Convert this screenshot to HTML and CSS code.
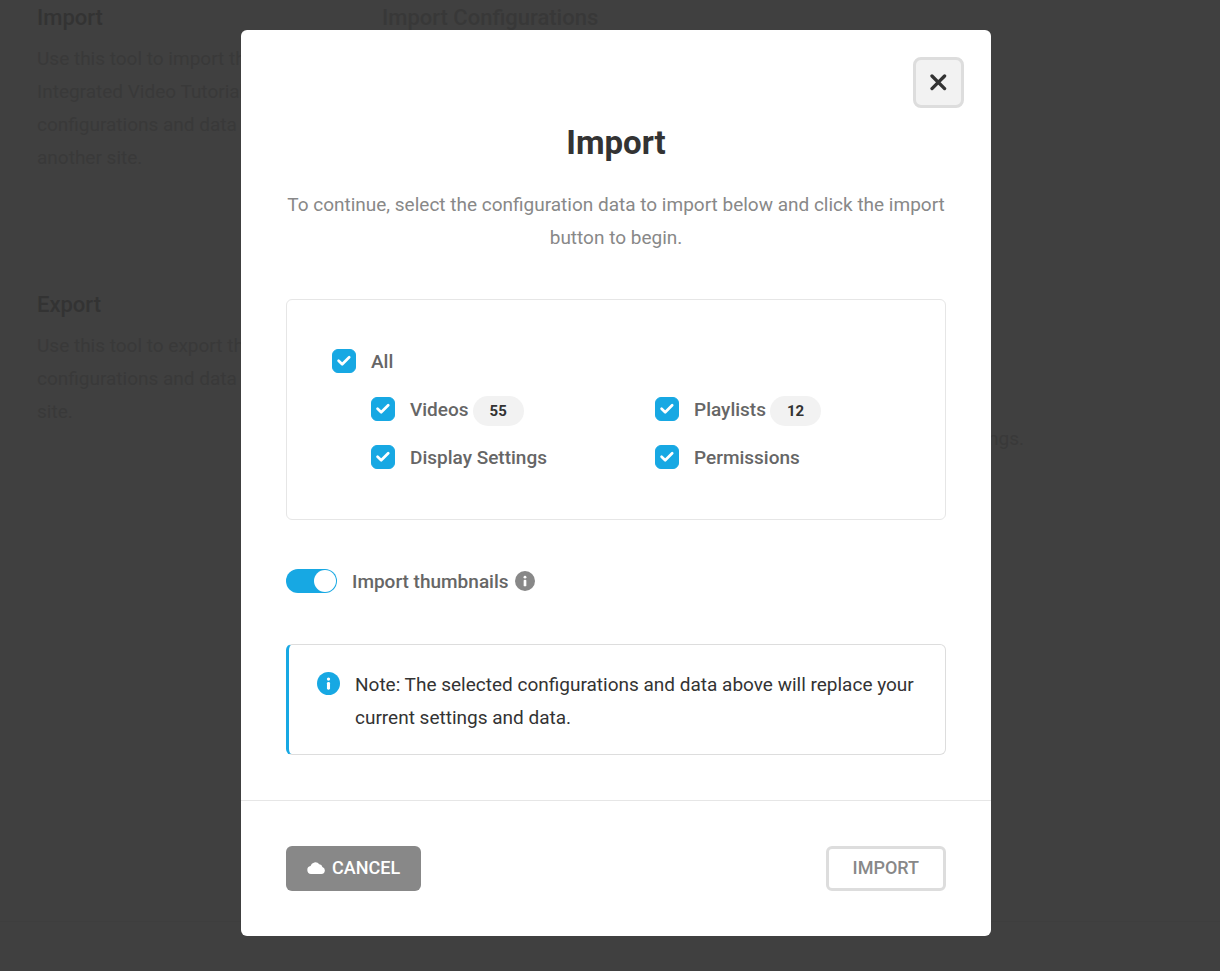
FILE: index.html
```html
<!DOCTYPE html>
<html lang="en">
<head>
<meta charset="utf-8">
<meta name="viewport" content="width=device-width, initial-scale=1">
<title>Import</title>
<link rel="stylesheet" href="styles.css">
</head>
<body>
<main class="page">
  <section class="setting setting-import">
    <div class="setting-label">
      <h2 class="setting-title">Import</h2>
      <p class="setting-text">Use this tool to import the Integrated Video Tutorials configurations and data from another site.</p>
    </div>
    <div class="setting-body">
      <h3 class="setting-subtitle">Import Configurations</h3>
    </div>
  </section>
  <section class="setting setting-export">
    <div class="setting-label">
      <h2 class="setting-title">Export</h2>
      <p class="setting-text">Use this tool to export the configurations and data to another site.</p>
    </div>
    <div class="setting-body">
      <p class="setting-hint">Settings.</p>
    </div>
  </section>
  <div class="page-end"></div>
</main>

<div class="overlay">
  <div class="modal" role="dialog" aria-modal="true" aria-labelledby="modal-title" aria-describedby="modal-text">
    <div class="modal-top">
      <button class="close" type="button" aria-label="Close">
        <svg class="close-icon" viewBox="0 0 17 17" aria-hidden="true"><path d="M2 2 14.6 14.6M14.6 2 2 14.6" fill="none" stroke="#333" stroke-width="3.3" stroke-linecap="round"/></svg>
      </button>
    </div>
    <div class="modal-content">
      <h1 class="modal-title" id="modal-title">Import</h1>
      <p class="modal-text" id="modal-text">To continue, select the configuration data to import below and click the import button to begin.</p>

      <div class="options">
        <label class="option"><span class="tick"><input class="tick-input" type="checkbox" checked><svg class="tick-icon" viewBox="0 0 24 24" aria-hidden="true"><path d="M6.6 11.8 10.2 15.2 17.2 8.2" /></svg></span><span class="option-name">All</span></label>
        <div class="option-grid">
          <label class="option"><span class="tick"><input class="tick-input" type="checkbox" checked><svg class="tick-icon" viewBox="0 0 24 24" aria-hidden="true"><path d="M6.6 11.8 10.2 15.2 17.2 8.2" /></svg></span><span class="option-name">Videos</span><span class="tag">55</span></label>
          <label class="option"><span class="tick"><input class="tick-input" type="checkbox" checked><svg class="tick-icon" viewBox="0 0 24 24" aria-hidden="true"><path d="M6.6 11.8 10.2 15.2 17.2 8.2" /></svg></span><span class="option-name">Playlists</span><span class="tag">12</span></label>
          <label class="option"><span class="tick"><input class="tick-input" type="checkbox" checked><svg class="tick-icon" viewBox="0 0 24 24" aria-hidden="true"><path d="M6.6 11.8 10.2 15.2 17.2 8.2" /></svg></span><span class="option-name">Display Settings</span></label>
          <label class="option"><span class="tick"><input class="tick-input" type="checkbox" checked><svg class="tick-icon" viewBox="0 0 24 24" aria-hidden="true"><path d="M6.6 11.8 10.2 15.2 17.2 8.2" /></svg></span><span class="option-name">Permissions</span></label>
        </div>
      </div>

      <div class="thumbs">
        <label class="option"><input class="switch" type="checkbox" role="switch" checked><span class="option-name">Import thumbnails</span></label>
        <svg class="info info-small" viewBox="0 0 24 24" aria-hidden="true"><circle cx="12" cy="12" r="12"/><circle class="info-mark" cx="12" cy="7.4" r="1.7"/><rect class="info-mark" x="10.4" y="10.4" width="3.2" height="8" rx="1.4"/></svg>
      </div>

      <div class="note">
        <svg class="info info-blue" viewBox="0 0 24 24" aria-hidden="true"><circle cx="12" cy="12" r="12"/><circle class="info-mark" cx="12" cy="7.4" r="1.7"/><rect class="info-mark" x="10.4" y="10.4" width="3.2" height="8" rx="1.4"/></svg>
        <p class="note-text">Note: The selected configurations and data above will replace your current settings and data.</p>
      </div>
    </div>
    <div class="modal-footer">
      <button class="button button-gray" type="button">
        <svg class="cloud" viewBox="0 0 18 12" aria-hidden="true"><path d="M4 12a4 4 0 0 1-.5-7.9A5 5 0 0 1 12.3 2.2 3.6 3.6 0 0 1 15.4 5 3.6 3.6 0 0 1 14.4 12Z" fill="#fff"/></svg>
        CANCEL
      </button>
      <button class="button button-ghost" type="button">IMPORT</button>
    </div>
  </div>
</div>
</body>
</html>
```
FILE: styles.css
```css
* {
  box-sizing: border-box;
}

body {
  margin: 0;
  background: #404040;
  color: #666;
  font-family: Roboto, "Liberation Sans", sans-serif;
  font-size: 19px;
  line-height: 33px;
}

h1, h2, h3, p {
  margin: 0;
}

.page {
  height: 100vh;
  overflow: hidden;
  padding: 1px 0 0 37px;
  color: #393939;
}

.setting {
  display: grid;
  grid-template-columns: 300px 1fr;
  gap: 45px;
}

.setting-export {
  margin-top: 114px;
}

.setting-title {
  margin-bottom: 8px;
  color: #333;
  font-size: 22px;
  font-weight: 500;
}

.setting-subtitle {
  color: #383838;
  font-size: 22px;
  font-weight: 500;
}

.setting-hint {
  width: 642px;
  padding-top: 134px;
  text-align: right;
}

.page-end {
  margin: 466px 0 0 -37px;
  border-top: 1px solid #3e3e3e;
}

.overlay {
  position: fixed;
  inset: 0;
  overflow: hidden;
  padding: 30px 0 30px 12px;
}

.modal {
  max-width: 750px;
  margin: 0 auto;
  border-radius: 6px;
  background: #fff;
}

.modal-top {
  display: flex;
  justify-content: flex-end;
  padding: 27px 27px 0;
}

.close {
  display: grid;
  place-items: center;
  width: 51px;
  height: 51px;
  padding: 0;
  border: 3px solid #ddd;
  border-radius: 8px;
  background: #f2f2f2;
}

.close-icon {
  width: 17px;
  height: 17px;
}

.modal-content {
  padding: 12px 45px 45px;
}

.modal-title {
  margin-bottom: 22px;
  color: #333;
  font-size: 33px;
  font-weight: 700;
  line-height: 46px;
  text-align: center;
}

.modal-text {
  color: #888;
  text-align: center;
}

.options {
  margin-top: 45px;
  padding: 45px;
  border: 1px solid #e6e6e6;
  border-radius: 6px;
}

.option {
  display: flex;
  align-items: center;
  height: 33px;
  font-weight: 500;
}

.option-name {
  margin-left: 15px;
}

.option-grid {
  display: grid;
  grid-template-columns: 1fr 1fr;
  gap: 15px 39px;
  padding: 15px 0 0 39px;
}

.tick {
  display: grid;
  padding-bottom: 1px;
}

.tick-input,
.tick-icon {
  grid-area: 1 / 1;
  width: 24px;
  height: 24px;
}

.tick-input {
  margin: 0;
  border: 1px solid #ddd;
  border-radius: 6px;
  appearance: none;
}

.tick-input:checked {
  border-color: #17a8e3;
  background: #17a8e3;
}

.tick-icon {
  fill: none;
  stroke: #fff;
  stroke-width: 2.7;
  stroke-linecap: round;
  stroke-linejoin: round;
  pointer-events: none;
}

.tag {
  align-self: flex-end;
  margin-left: 4px;
  padding: 0 17px;
  border-radius: 15px;
  background: #f2f2f2;
  color: #333;
  font-size: 15px;
  font-weight: 700;
  line-height: 30px;
}

.thumbs {
  display: flex;
  align-items: center;
  gap: 6px;
  margin-top: 45px;
}

.switch {
  display: flex;
  align-items: center;
  justify-content: flex-start;
  width: 51px;
  height: 24px;
  margin: 0 0 1px;
  padding: 1px;
  border-radius: 12px;
  background: #aaa;
  appearance: none;
}

.switch::before {
  width: 22px;
  height: 22px;
  border-radius: 50%;
  background: #fff;
  content: "";
}

.switch:checked {
  justify-content: flex-end;
  background: #17a8e3;
}

.info {
  flex: none;
  width: 23px;
  height: 23px;
}

.info-small {
  width: 20px;
  height: 20px;
  margin-bottom: 2px;
  fill: #888;
}

.info-blue {
  margin-top: 4px;
  fill: #17a8e3;
}

.info-mark {
  fill: #fff;
}

.note {
  display: flex;
  gap: 15px;
  margin-top: 46px;
  padding: 23px 28px 20px;
  border: 1px solid #ddd;
  border-left: 3px solid #17a8e3;
  border-radius: 6px;
  color: #333;
}

.modal-footer {
  display: flex;
  justify-content: space-between;
  padding: 45px;
  border-top: 1px solid #e6e6e6;
}

.button {
  display: flex;
  align-items: center;
  justify-content: center;
  gap: 7px;
  height: 45px;
  border-radius: 6px;
  font-family: inherit;
  font-size: 18px;
  font-weight: 500;
}

.button-gray {
  padding: 0 21px 2px;
  border: 0;
  background: #888;
  color: #fff;
}

.button-ghost {
  padding: 0 24px 2px;
  border: 3px solid #ddd;
  background: #fff;
  color: #888;
}

.cloud {
  width: 18px;
  height: 12px;
}
```
